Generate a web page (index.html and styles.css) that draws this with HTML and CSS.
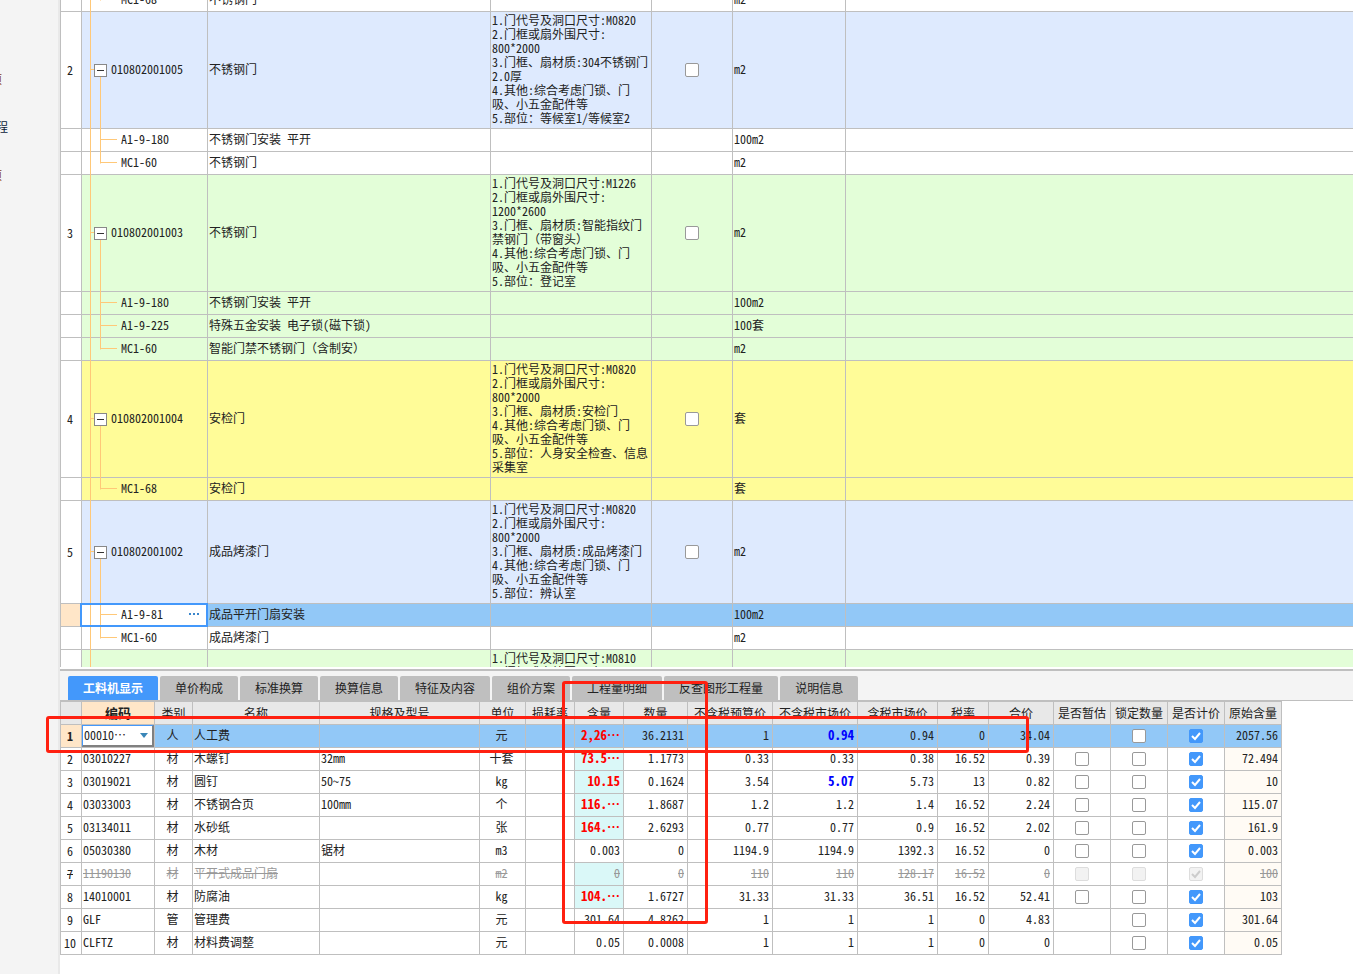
FILE: index.html
```html
<!DOCTYPE html>
<html lang="zh-CN">
<head>
<meta charset="utf-8">
<title>工料机显示</title>
<link rel="stylesheet" href="styles.css">
</head>
<body>
<nav class="side">
  <span class="side-item narrow">项</span>
  <span class="side-item">程</span>
  <span class="side-item narrow">项</span>
</nav>
<main class="main">
  <section class="bill">
    <table class="grid bill-grid">
      <colgroup><col class="w21"><col class="w126"><col class="w283"><col class="w161"><col class="w81"><col class="w113"><col></colgroup>
      <tbody>
      <tr><th><td class="tree last">MC1-68<td>不锈钢门<td><td><td>m2<td></tr>
      <tr class="blue"><th>2<td class="tree group"><button class="fold" aria-label="折叠"></button>010802001005<td>不锈钢门<td>1.门代号及洞口尺寸:M0820<br>2.门框或扇外围尺寸:<br>800*2000<br>3.门框、扇材质:304不锈钢门<br>2.0厚<br>4.其他:综合考虑门锁、门<br>吸、小五金配件等<br>5.部位：等候室1/等候室2<td class="mid"><input type="checkbox" aria-label="选择 010802001005"><td>m2<td></tr>
      <tr><th><td class="tree">A1-9-180<td>不锈钢门安装 平开<td><td><td>100m2<td></tr>
      <tr><th><td class="tree last">MC1-60<td>不锈钢门<td><td><td>m2<td></tr>
      <tr class="green"><th>3<td class="tree group"><button class="fold" aria-label="折叠"></button>010802001003<td>不锈钢门<td>1.门代号及洞口尺寸:M1226<br>2.门框或扇外围尺寸:<br>1200*2600<br>3.门框、扇材质:智能指纹门<br><span class="wide">禁钢门（带窗头）</span><br>4.其他:综合考虑门锁、门<br>吸、小五金配件等<br>5.部位：登记室<td class="mid"><input type="checkbox" aria-label="选择 010802001003"><td>m2<td></tr>
      <tr class="green"><th><td class="tree">A1-9-180<td>不锈钢门安装 平开<td><td><td>100m2<td></tr>
      <tr class="green"><th><td class="tree">A1-9-225<td>特殊五金安装 电子锁(磁下锁)<td><td><td>100套<td></tr>
      <tr class="green"><th><td class="tree last">MC1-60<td><span class="wide">智能门禁不锈钢门（含制安）</span><td><td><td>m2<td></tr>
      <tr class="yellow"><th>4<td class="tree group"><button class="fold" aria-label="折叠"></button>010802001004<td>安检门<td>1.门代号及洞口尺寸:M0820<br>2.门框或扇外围尺寸:<br>800*2000<br>3.门框、扇材质:安检门<br>4.其他:综合考虑门锁、门<br>吸、小五金配件等<br>5.部位：人身安全检查、信息<br>采集室<td class="mid"><input type="checkbox" aria-label="选择 010802001004"><td>套<td></tr>
      <tr class="yellow"><th><td class="tree last">MC1-68<td>安检门<td><td><td>套<td></tr>
      <tr class="blue"><th>5<td class="tree group"><button class="fold" aria-label="折叠"></button>010802001002<td>成品烤漆门<td>1.门代号及洞口尺寸:M0820<br>2.门框或扇外围尺寸:<br>800*2000<br>3.门框、扇材质:成品烤漆门<br>4.其他:综合考虑门锁、门<br>吸、小五金配件等<br>5.部位：辨认室<td class="mid"><input type="checkbox" aria-label="选择 010802001002"><td>m2<td></tr>
      <tr class="selected"><th><td class="tree editing"><div class="edit">A1-9-81<button class="more" aria-label="更多"><i></i><i></i><i></i></button></div><td>成品平开门扇安装<td><td><td>100m2<td></tr>
      <tr><th><td class="tree last">MC1-60<td>成品烤漆门<td><td><td>m2<td></tr>
      <tr class="green"><th><td class="tree stem"><td><td>1.门代号及洞口尺寸:M0810<br>2.门框或扇外围尺寸:<td><td><td></tr>
      </tbody>
    </table>
  </section>
  <section class="detail">
    <div class="tabs" role="tablist">
      <button class="tab active" role="tab" aria-selected="true">工料机显示</button>
      <button class="tab" role="tab">单价构成</button>
      <button class="tab" role="tab">标准换算</button>
      <button class="tab" role="tab">换算信息</button>
      <button class="tab" role="tab">特征及内容</button>
      <button class="tab" role="tab">组价方案</button>
      <button class="tab" role="tab">工程量明细</button>
      <button class="tab" role="tab">反查图形工程量</button>
      <button class="tab" role="tab">说明信息</button>
    </div>
    <table class="grid res-grid">
      <colgroup><col class="w21"><col class="w73"><col class="w38"><col class="w127"><col class="w160"><col class="w46"><col class="w49"><col class="w49"><col class="w64"><col class="w85"><col class="w85"><col class="w80"><col class="w51"><col class="w65"><col class="w57"><col class="w57"><col class="w57"><col class="w57"></colgroup>
      <thead>
      <tr><th><th class="current">编码<th>类别<th>名称<th>规格及型号<th>单位<th>损耗率<th>含量<th>数量<th>不含税预算价<th>不含税市场价<th>含税市场价<th>税率<th>合价<th>是否暂估<th>锁定数量<th>是否计价<th>原始含量</tr>
      </thead>
      <tbody>
      <tr class="selected"><th>1<td class="picker"><select aria-label="编码"><option>00010⋯</option></select><td>人<td>人工费<td><td>元<td><td class="changed">2,26⋯<td>36.2131<td>1<td class="price">0.94<td>0.94<td>0<td>34.04<td><td><input type="checkbox" aria-label="锁定数量 1"><td><input type="checkbox" aria-label="是否计价 1" checked><td>2057.56</tr>
      <tr><th>2<td>03010227<td>材<td>木螺钉<td>32mm<td>十套<td><td class="changed">73.5⋯<td>1.1773<td>0.33<td>0.33<td>0.38<td>16.52<td>0.39<td><input type="checkbox" aria-label="是否暂估 2"><td><input type="checkbox" aria-label="锁定数量 2"><td><input type="checkbox" aria-label="是否计价 2" checked><td>72.494</tr>
      <tr><th>3<td>03019021<td>材<td>圆钉<td>50~75<td>kg<td><td class="changed">10.15<td>0.1624<td>3.54<td class="price">5.07<td>5.73<td>13<td>0.82<td><input type="checkbox" aria-label="是否暂估 3"><td><input type="checkbox" aria-label="锁定数量 3"><td><input type="checkbox" aria-label="是否计价 3" checked><td>10</tr>
      <tr><th>4<td>03033003<td>材<td>不锈钢合页<td>100mm<td>个<td><td class="changed">116.⋯<td>1.8687<td>1.2<td>1.2<td>1.4<td>16.52<td>2.24<td><input type="checkbox" aria-label="是否暂估 4"><td><input type="checkbox" aria-label="锁定数量 4"><td><input type="checkbox" aria-label="是否计价 4" checked><td>115.07</tr>
      <tr><th>5<td>03134011<td>材<td>水砂纸<td><td>张<td><td class="changed">164.⋯<td>2.6293<td>0.77<td>0.77<td>0.9<td>16.52<td>2.02<td><input type="checkbox" aria-label="是否暂估 5"><td><input type="checkbox" aria-label="锁定数量 5"><td><input type="checkbox" aria-label="是否计价 5" checked><td>161.9</tr>
      <tr><th>6<td>05030380<td>材<td>木材<td>锯材<td>m3<td><td>0.003<td>0<td>1194.9<td>1194.9<td>1392.3<td>16.52<td>0<td><input type="checkbox" aria-label="是否暂估 6"><td><input type="checkbox" aria-label="锁定数量 6"><td><input type="checkbox" aria-label="是否计价 6" checked><td>0.003</tr>
      <tr class="void"><th>7<td>11190130<td>材<td>平开式成品门扇<td><td>m2<td><td class="tint">0<td>0<td>110<td>110<td>128.17<td>16.52<td>0<td><input type="checkbox" aria-label="是否暂估 7" disabled><td><input type="checkbox" aria-label="锁定数量 7" disabled><td><input type="checkbox" aria-label="是否计价 7" checked disabled><td>100</tr>
      <tr><th>8<td>14010001<td>材<td>防腐油<td><td>kg<td><td class="changed">104.⋯<td>1.6727<td>31.33<td>31.33<td>36.51<td>16.52<td>52.41<td><input type="checkbox" aria-label="是否暂估 8"><td><input type="checkbox" aria-label="锁定数量 8"><td><input type="checkbox" aria-label="是否计价 8" checked><td>103</tr>
      <tr><th>9<td>GLF<td>管<td>管理费<td><td>元<td><td>301.64<td>4.8262<td>1<td>1<td>1<td>0<td>4.83<td><td><input type="checkbox" aria-label="锁定数量 9"><td><input type="checkbox" aria-label="是否计价 9" checked><td>301.64</tr>
      <tr><th>10<td>CLFTZ<td>材<td>材料费调整<td><td>元<td><td>0.05<td>0.0008<td>1<td>1<td>1<td>0<td>0<td><td><input type="checkbox" aria-label="锁定数量 10"><td><input type="checkbox" aria-label="是否计价 10" checked><td>0.05</tr>
      </tbody>
    </table>
    <div class="mark mark-row"></div>
    <div class="mark mark-cols"></div>
  </section>
</main>
</body>
</html>
```
FILE: styles.css
```css
* { box-sizing: border-box; }

body {
  margin: 0;
  height: 100vh;
  display: flex;
  overflow: hidden;
  background: #fff;
  color: #222;
  font: 12px/14px "Noto Sans CJK SC", sans-serif;
  font-feature-settings: "hwid";
  text-spacing-trim: space-all;
}

button, select, input { font: inherit; font-feature-settings: inherit; color: inherit; margin: 0; padding: 0; border: 0; }
.wide { font-feature-settings: normal; }

/* left strip */
.side {
  flex: none;
  width: 60px;
  padding-top: 72px;
  display: flex;
  flex-direction: column;
  gap: 34px;
  background: #f4f4f4;
  border-right: 2px solid #e9e9e9;
}
.side-item { width: 8px; display: flex; justify-content: flex-end; overflow: hidden; color: #0a1a3a; }
.side-item.narrow { width: 2px; color: #8a3c10; }

.main { flex: 1; min-width: 0; display: flex; flex-direction: column; }

/* grids */
.grid { border-collapse: separate; border-spacing: 0; table-layout: fixed; border-left: 1px solid #bfbfbf; }
.grid th, .grid td {
  height: 23px;
  padding: 0 3px 2px 1px;
  border-right: 1px solid #bfbfbf;
  border-bottom: 1px solid #bfbfbf;
  text-align: left;
  vertical-align: middle;
  white-space: nowrap;
  font-weight: normal;
}
.grid th { padding: 0 2px 1px 0; text-align: center; background: #fff; }
.w21 { width: 21px; } .w38 { width: 38px; } .w46 { width: 46px; } .w49 { width: 49px; }
.w51 { width: 51px; } .w57 { width: 57px; } .w64 { width: 64px; } .w65 { width: 65px; }
.w73 { width: 73px; } .w80 { width: 80px; } .w81 { width: 81px; } .w85 { width: 85px; }
.w113 { width: 113px; } .w126 { width: 126px; } .w127 { width: 127px; } .w160 { width: 160px; }
.w161 { width: 161px; } .w283 { width: 283px; }

/* bill */
.bill { flex: 1; min-height: 0; overflow: hidden; margin-bottom: 2px; }
.bill-grid { width: 100%; margin-top: -11px; }
.bill-grid td:nth-child(4) { padding: 1px 1px 3px; }
.bill-grid tr td:last-child { border-right: 0; }
.grid .mid { padding: 0 0 2px; }
.blue td { background: #deeafe; }
.green td { background: #e3fed8; }
.yellow td { background: #fffc98; }
.grid .selected td { background: #92c8f7; }
.grid .selected th { background: #ffe6c8; }

/* tree column */
.grid .tree { position: relative; padding-left: 39px; }
.grid .group { padding-left: 12px; }
.tree::before {
  content: "";
  position: absolute;
  inset: 0 0 -1px;
  pointer-events: none;
  background:
    linear-gradient(#ffc878, #ffc878) 8px 0 / 1px 100% no-repeat,
    linear-gradient(#ffc878, #ffc878) 18px 0 / 1px 100% no-repeat,
    linear-gradient(#ffc878, #ffc878) 18px calc(50% - 1px) / 17px 1px no-repeat;
}
.tree.last::before { background-size: 1px 100%, 1px 50%, 17px 1px; }
.tree.group::before {
  background-position: 8px 0, 18px 100%, 8px calc(50% - 1px);
  background-size: 1px 100%, 1px calc(50% - 6px), 4px 1px;
}
.tree.stem::before { background-size: 1px 100%, 0 0, 0 0; }
.fold {
  width: 13px;
  height: 13px;
  margin-right: 4px;
  vertical-align: -2px;
  border: 1px solid #888;
  background: linear-gradient(#333, #333) center / 7px 1px no-repeat #fff;
}
.grid .selected .editing { background: #fff; }
.editing::after {
  content: "";
  position: absolute;
  inset: -1px -1px -1px -2px;
  border: 2px solid #4398fb;
  pointer-events: none;
}
.edit { display: flex; align-items: center; justify-content: space-between; padding-right: 5px; }
.more { display: flex; gap: 2px; background: none; }
.more i { width: 2px; height: 2px; background: #3a86cc; }

/* check boxes */
input[type="checkbox"] {
  appearance: none;
  display: block;
  width: 14px;
  height: 14px;
  margin: 1px auto 0;
  border: 1px solid #999;
  border-radius: 2px;
  background: #fff;
}
input[type="checkbox"]:checked {
  border-color: #4398fb;
  background: #4398fb url("data:image/svg+xml,%3Csvg xmlns='http://www.w3.org/2000/svg' viewBox='0 0 12 12'%3E%3Cpath d='M2 6l3 3 5-6' fill='none' stroke='white' stroke-width='2'/%3E%3C/svg%3E") center / 12px no-repeat;
}
input[type="checkbox"]:disabled { border-color: #ddd; background-color: #f2f2f2; }
input[type="checkbox"]:checked:disabled {
  background-image: url("data:image/svg+xml,%3Csvg xmlns='http://www.w3.org/2000/svg' viewBox='0 0 12 12'%3E%3Cpath d='M2 6l3 3 5-6' fill='none' stroke='%23ccc' stroke-width='2'/%3E%3C/svg%3E");
}

/* detail panel */
.detail { position: relative; flex: none; padding-bottom: 19px; border-top: 2px solid #bfbfbf; }
.tabs { display: flex; gap: 2px; padding: 5px 8px 0; background: #f4f4f4; border-bottom: 1px solid #bfbfbf; }
.tab { height: 24px; padding: 0 15px; background: #bfbfbf; border-radius: 2px 2px 0 0; white-space: nowrap; }
.tab.active { background: #4398fb; color: #fff; font-weight: bold; }

.res-grid { width: 1222px; border-top: 1px solid #bfbfbf; }
.grid thead th { background: #e8e8e8; padding: 0; }
.res-grid thead .current { background: #ffe6c8; font-size: 13px; font-weight: bold; }
.res-grid td:nth-child(3), .res-grid td:nth-child(6) { text-align: center; }
.res-grid td:nth-child(n+7) { text-align: right; }
.res-grid td:nth-child(n+15):nth-child(-n+17) { padding: 0 0 2px; }
.res-grid tr:not(.selected) td:last-child { background: #fffbf5; }
.res-grid .changed, .res-grid .tint { background: #daf8f8; }
.res-grid .changed { color: #f00; font-size: 13px; font-weight: bold; }
.res-grid .price { color: #00f; font-size: 13px; font-weight: bold; }
.res-grid .selected th { font-weight: bold; }
.void th, .void td { text-decoration: line-through; }
.void td { color: #999; }
.grid .picker { padding: 0; }
.picker select {
  display: block;
  width: 100%;
  height: 22px;
  padding: 0 0 2px 1px;
  appearance: none;
  border: solid #4398fb;
  border-width: 1px 2px 2px 1px;
  border-right-color: #808080;
  border-bottom-color: #808080;
  border-radius: 0;
  background: #fff url("data:image/svg+xml,%3Csvg xmlns='http://www.w3.org/2000/svg' viewBox='0 0 8 5'%3E%3Cpath d='M0 0h8L4 5z' fill='%233a86b8'/%3E%3C/svg%3E") right 4px center / 8px 5px no-repeat;
}

/* highlight frames over the grid */
.mark { position: absolute; border: 3px solid #ff2010; border-radius: 3px; pointer-events: none; }
.mark-row { left: -14px; top: 45px; width: 983px; height: 37px; }
.mark-cols { left: 502px; top: 10px; width: 146px; height: 243px; }
```
